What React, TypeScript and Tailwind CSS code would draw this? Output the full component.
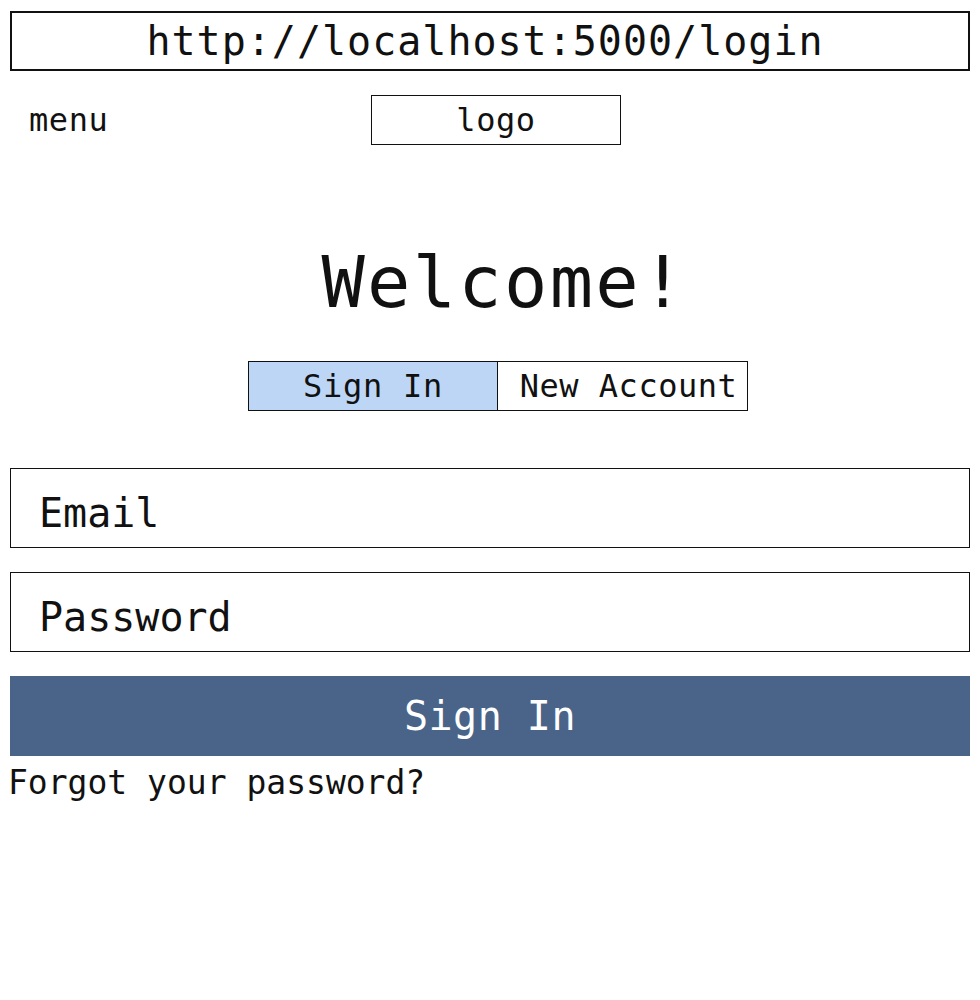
import { useState } from "react";

const mono = "font-['DejaVu_Sans_Mono',monospace]";

export default function App() {
  const [tab, setTab] = useState<"signin" | "new">("signin");

  return (
    <div className={`min-h-screen bg-white text-[#111] ${mono} px-[10px] pt-[11px]`}>
      {/* address bar */}
      <div className="h-[60px] border-2 border-[#111] flex items-center justify-center pr-[10px] text-[40px] tracking-[1px] leading-none">
        http://localhost:5000/login
      </div>

      {/* header */}
      <div className="flex items-center mt-[24px] h-[50px]">
        <div className="w-[361px] pl-[19px] text-[32px] tracking-[0.6px] leading-none">menu</div>
        <div className="w-[250px] h-[50px] border border-[#111] flex items-center justify-center text-[32px] tracking-[0.6px] leading-none">
          logo
        </div>
      </div>

      {/* welcome */}
      <div className="flex justify-center pl-[28px] mt-[101px]">
        <h1 className="text-[72px] tracking-[2.3px] leading-none">Welcome!</h1>
      </div>

      <div className="flex justify-center pl-[16px] mt-[43px]">
        <button
          onClick={() => setTab("signin")}
          className={`w-[250px] h-[50px] border border-[#111] text-[32px] tracking-[0.7px] leading-none ${
            tab === "signin" ? "bg-[#bdd6f6]" : "bg-white"
          }`}
        >
          Sign In
        </button>
        <button
          onClick={() => setTab("new")}
          className={`w-[250px] h-[50px] border border-l-0 border-[#111] pl-[12px] text-[32px] tracking-[0.5px] leading-none ${
            tab === "new" ? "bg-[#bdd6f6]" : "bg-white"
          }`}
        >
          New Account
        </button>
      </div>

      {/* form */}
      <div className="mt-[57px] flex flex-col gap-[24px]">
        <input
          placeholder="Email"
          className="h-[80px] w-full border border-[#111] px-[28px] pt-[10px] text-[40px] placeholder:text-[#111] outline-none"
        />
        <input
          type="password"
          placeholder="Password"
          className="h-[80px] w-full border border-[#111] px-[28px] pt-[10px] text-[40px] placeholder:text-[#111] outline-none"
        />
        <button className="h-[80px] w-full bg-[#4a6489] text-white text-[40px] tracking-[0.5px] leading-none">
          Sign In
        </button>
      </div>
      <div className="text-[33px] leading-none mt-[10px] -ml-[2px]">Forgot your password?</div>
    </div>
  );
}
